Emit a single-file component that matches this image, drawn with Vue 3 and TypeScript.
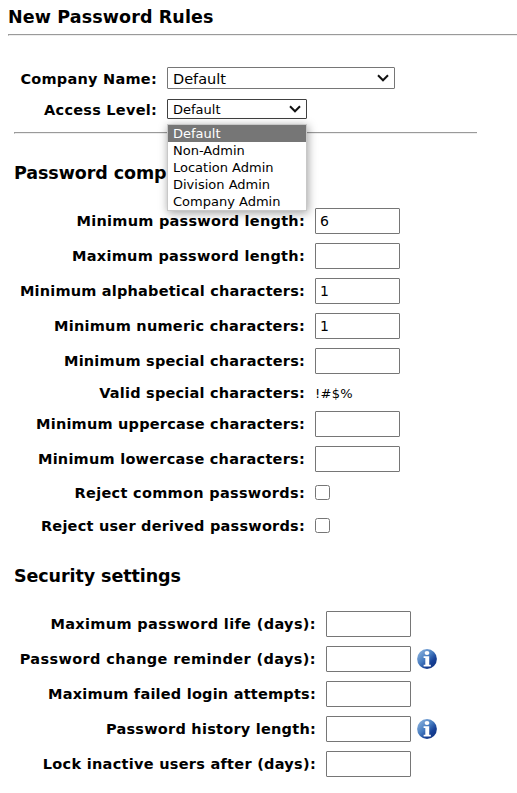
<script setup lang="ts">
import { ref } from 'vue'

interface Rule {
  id: string
  label: string
  kind: 'input' | 'check' | 'text'
  value: string
  spacing: number
  info?: boolean
}

const levels = ['Default', 'Non-Admin', 'Location Admin', 'Division Admin', 'Company Admin']
const selected = ref('Default')

const complexity = ref<Rule[]>([
  { id: 'min', label: 'Minimum password length:', kind: 'input', value: '6', spacing: 0.26 },
  { id: 'max', label: 'Maximum password length:', kind: 'input', value: '', spacing: 0.29 },
  { id: 'alpha', label: 'Minimum alphabetical characters:', kind: 'input', value: '1', spacing: 0.2 },
  { id: 'num', label: 'Minimum numeric characters:', kind: 'input', value: '1', spacing: 0.25 },
  { id: 'special', label: 'Minimum special characters:', kind: 'input', value: '', spacing: 0.22 },
  { id: 'valid', label: 'Valid special characters:', kind: 'text', value: '!#$%', spacing: 0.22 },
  { id: 'upper', label: 'Minimum uppercase characters:', kind: 'input', value: '', spacing: 0.21 },
  { id: 'lower', label: 'Minimum lowercase characters:', kind: 'input', value: '', spacing: 0.24 },
  { id: 'common', label: 'Reject common passwords:', kind: 'check', value: '', spacing: 0.3 },
  { id: 'derived', label: 'Reject user derived passwords:', kind: 'check', value: '', spacing: 0.23 },
])

const security = ref<Rule[]>([
  { id: 'life', label: 'Maximum password life (days):', kind: 'input', value: '', spacing: 0.35 },
  { id: 'remind', label: 'Password change reminder (days):', kind: 'input', value: '', spacing: 0.38, info: true },
  { id: 'failed', label: 'Maximum failed login attempts:', kind: 'input', value: '', spacing: 0.22 },
  { id: 'history', label: 'Password history length:', kind: 'input', value: '', spacing: 0.24, info: true },
  { id: 'lock', label: 'Lock inactive users after (days):', kind: 'input', value: '', spacing: 0.28 },
])
</script>

<template>
  <main class="page">
    <h1 class="title">New Password Rules</h1>
    <div class="rule"></div>

    <div class="body">
      <div class="pick company">
        <span class="label">Company Name:</span>
        <div class="select wide">
          <span>Default</span>
          <svg class="chevron" viewBox="0 0 12 8"><path d="M1 1.3 6 6.3 11 1.3" /></svg>
        </div>
      </div>
      <div class="pick access">
        <span class="label">Access Level:</span>
        <div class="select narrow">
          <span>{{ selected }}</span>
          <svg class="chevron" viewBox="0 0 12 8"><path d="M1 1.3 6 6.3 11 1.3" /></svg>
          <ul class="menu">
            <li v-for="l in levels" :key="l" :class="{ on: l === selected }" @click="selected = l">{{ l }}</li>
          </ul>
        </div>
      </div>
      <div class="rule inner"></div>

      <h2 class="heading first">Password complexity</h2>
      <div class="rows">
        <div v-for="r in complexity" :key="r.id" class="row" :class="r.kind">
          <label class="label" :for="r.id" :style="{ letterSpacing: r.spacing + 'px' }">{{ r.label }}</label>
          <input v-if="r.kind === 'input'" :id="r.id" v-model="r.value" class="field" type="text" />
          <input v-else-if="r.kind === 'check'" :id="r.id" class="box" type="checkbox" />
          <span v-else class="chars">{{ r.value }}</span>
        </div>
      </div>

      <h2 class="heading second">Security settings</h2>
      <div class="rows security">
        <div v-for="r in security" :key="r.id" class="row input">
          <label class="label" :for="r.id" :style="{ letterSpacing: r.spacing + 'px' }">{{ r.label }}</label>
          <input :id="r.id" v-model="r.value" class="field" type="text" />
          <svg v-if="r.info" class="info" viewBox="0 0 20 20">
            <defs>
              <linearGradient :id="'g-' + r.id" x1="0.1" y1="0.1" x2="0.85" y2="0.9">
                <stop offset="0" stop-color="#86aedb" />
                <stop offset="0.45" stop-color="#477cc0" />
                <stop offset="0.75" stop-color="#174297" />
                <stop offset="1" stop-color="#123584" />
              </linearGradient>
            </defs>
            <circle cx="10" cy="10" r="9.9" :fill="`url(#g-${r.id})`" />
            <ellipse cx="10" cy="4" rx="2.4" ry="1.9" fill="#fff" />
            <path d="M6.6 7.3H12.2V15.8H13.8V17.5H6.6V15.8H8.3V9H6.6Z" fill="#fff" />
          </svg>
        </div>
      </div>
    </div>
  </main>
</template>

<style>
body {
  background: #fff;
  overflow: hidden;
}
</style>

<style scoped>
.page {
  box-sizing: border-box;
  height: 793px;
  padding-left: 8px;
  color: #000;
  font-family: "DejaVu Sans", Verdana, sans-serif;
}
.title {
  margin: 0;
  height: 34px;
  box-sizing: border-box;
  padding-top: 6px;
  font-size: 17.5px;
  line-height: 22px;
  letter-spacing: 0.12px;
}
.rule {
  height: 2px;
  box-sizing: border-box;
  border-top: 1px solid #9a9a9a;
  border-bottom: 1px solid #eee;
  border-left: 1px solid #9a9a9a;
}
.body {
  padding-left: 6px;
}
.pick {
  display: flex;
  align-items: center;
  gap: 10px;
}
.pick .label {
  width: 143px;
  padding-top: 1px;
}
.company {
  margin-top: 31px;
  height: 22px;
}
.access {
  margin-top: 10px;
  height: 20px;
}
.label {
  flex: none;
  text-align: right;
  white-space: nowrap;
  font-size: 14.5px;
  font-weight: bold;
  line-height: 20px;
  letter-spacing: 0.25px;
}
.select {
  position: relative;
  box-sizing: border-box;
  display: flex;
  align-items: center;
  justify-content: space-between;
  padding: 0 5px;
  border: 1px solid #767676;
  border-radius: 1px;
}
.wide {
  width: 228px;
  height: 22px;
  font-size: 14.5px;
}
.wide span {
  padding-top: 1px;
}
.narrow {
  width: 140px;
  height: 20px;
  border-color: #404040;
  font-size: 13px;
}
.chevron {
  width: 12px;
  height: 8px;
}
.chevron path {
  fill: none;
  stroke: #111;
  stroke-width: 2;
}
.menu {
  position: absolute;
  z-index: 2;
  top: 24px;
  left: -1px;
  width: 140px;
  box-sizing: border-box;
  margin: 0;
  padding: 0;
  border: 1px solid #c8c8c8;
  background: #fff;
  box-shadow: 1px 2px 9px rgba(0, 0, 0, 0.38);
  list-style: none;
}
.menu li {
  height: 17px;
  padding-left: 5px;
  line-height: 17px;
}
.menu .on {
  background: #767676;
  color: #fff;
}
.inner {
  width: 463px;
  margin-top: 13px;
}
.heading {
  margin: 0;
  font-size: 17.5px;
  line-height: 22px;
  letter-spacing: -0.08px;
}
.first {
  margin-top: 28px;
  height: 41px;
}
.second {
  margin-top: 23px;
  height: 41px;
}
.row {
  display: flex;
  align-items: center;
  gap: 10px;
  height: 35px;
}
.row .label {
  width: 291px;
}
.security .label {
  width: 302px;
}
.field {
  width: 85px;
  height: 26px;
  box-sizing: border-box;
  margin: 0;
  padding: 1px 4px;
  border: 1px solid #767676;
  border-radius: 1px;
  background: #fff;
  font-family: inherit;
  font-size: 14px;
}
.row.text {
  height: 28px;
}
.text .label,
.text .chars {
  padding-top: 2px;
}
.chars {
  font-size: 13px;
  letter-spacing: 0.3px;
}
.row.check {
  height: 33px;
}
.box {
  appearance: none;
  width: 15px;
  height: 15px;
  box-sizing: border-box;
  margin: 0;
  border: 1px solid #767676;
  border-radius: 2.5px;
  background: #fff;
}
.info {
  width: 20px;
  height: 20px;
  margin-left: -4px;
}
</style>
